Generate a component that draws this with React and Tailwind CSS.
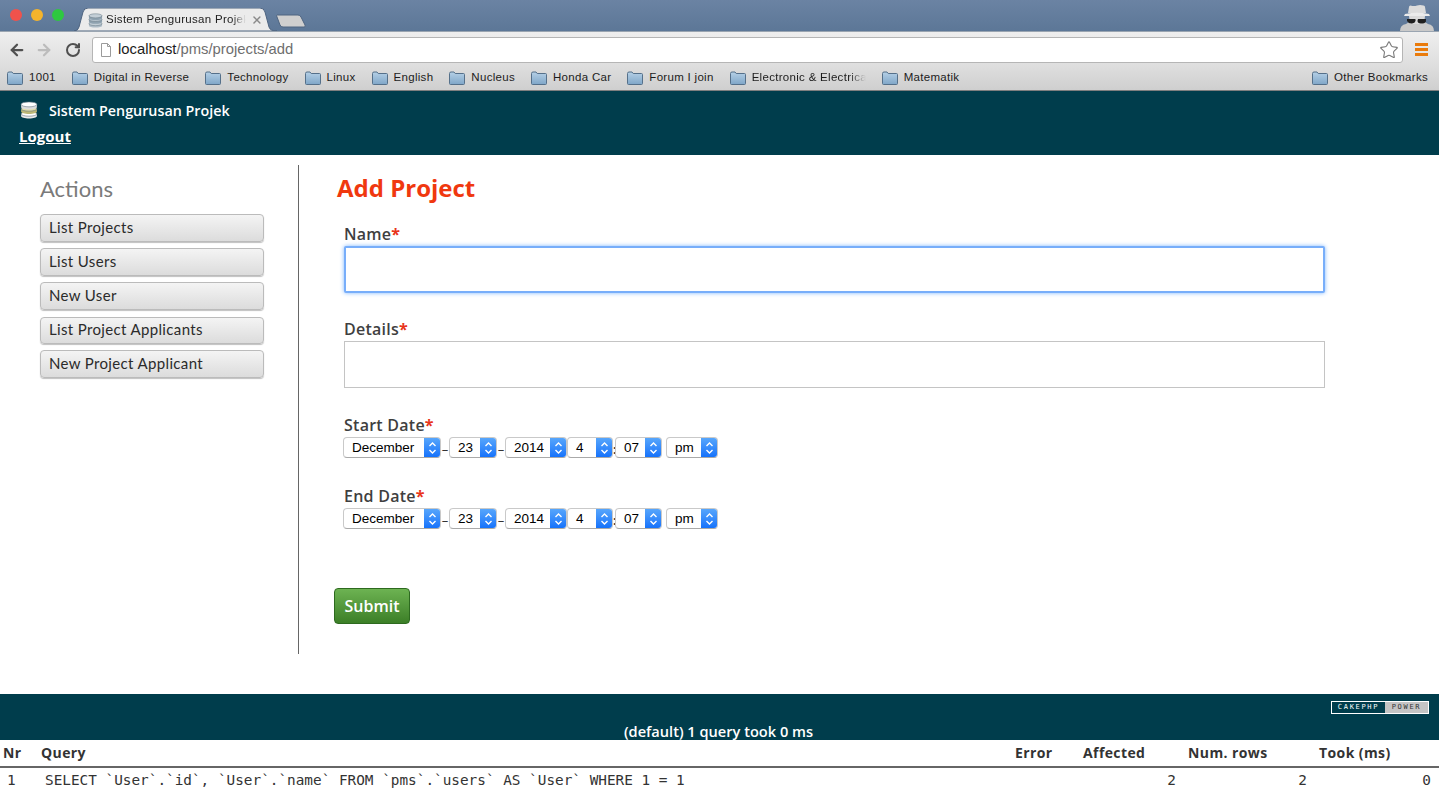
import { Star, ArrowLeft, ArrowRight, RotateCw, X } from 'lucide-react';

const bookmarks = ['1001', 'Digital in Reverse', 'Technology', 'Linux', 'English', 'Nucleus', 'Honda Car', 'Forum I join'];
const actions = [
  { label: 'List Projects', h: 'h-[28px]', mt: 'mt-0' },
  { label: 'List Users', h: 'h-[28px]', mt: 'mt-[6px]' },
  { label: 'New User', h: 'h-[28px]', mt: 'mt-[6px]' },
  { label: 'List Project Applicants', h: 'h-[27px]', mt: 'mt-[7px]' },
  { label: 'New Project Applicant', h: 'h-[28px]', mt: 'mt-[6px]' },
];

const Folder = () => (
  <svg width="16" height="14" viewBox="0 0 16 14" className="shrink-0">
    <defs>
      <linearGradient id="folderFill" x1="0" y1="0" x2="0" y2="1">
        <stop offset="0" stopColor="#b5d0e6" />
        <stop offset="1" stopColor="#7fa6c8" />
      </linearGradient>
    </defs>
    <path d="M.5 2.5Q.5 1 2 1h3l1.2 1.5H14.5q1 0 1 1v9q0 1-1 1h-13q-1 0-1-1z" fill="url(#folderFill)" stroke="#55708a" />
  </svg>
);

const Bookmark = ({ label, fade }) => (
  <div className="flex items-center gap-[6px]">
    <Folder />
    <span className={`text-[11.5px] tracking-[0.3px] text-[#1c1c1c] whitespace-nowrap ${fade ? 'w-[114px] overflow-hidden [mask-image:linear-gradient(to_right,black_85%,transparent)]' : ''}`}>{label}</span>
  </div>
);

const StackIcon = ({ size = 16, light }) => (
  <svg width={size} height={size} viewBox="0 0 16 16" className="shrink-0">
    <path d="M1 11.500v2c0 1.100 3.100 2 7 2s7-.9 7-2v-2z" fill={light ? '#e9e9e9' : '#aebcc7'} />
    <ellipse cx="8" cy="11.500" rx="7" ry="2" fill={light ? '#fff' : '#c3ced6'} stroke="#5c6f7d" strokeWidth=".5" />
    <path d="M1 7v2.500c0 1.100 3.100 2 7 2s7-.9 7-2V7z" fill={light ? '#bdb878' : '#8fa2b0'} />
    <ellipse cx="8" cy="7" rx="7" ry="2" fill={light ? '#e3dfa8' : '#b7c4ce'} stroke="#5c6f7d" strokeWidth=".5" />
    <path d="M1 3v2.500c0 1.100 3.100 2 7 2s7-.9 7-2V3z" fill={light ? '#dcdcdc' : '#8fa2b0'} />
    <ellipse cx="8" cy="3" rx="7" ry="2.200" fill={light ? '#fff' : '#c3ced6'} stroke="#5c6f7d" strokeWidth=".5" />
  </svg>
);

const Incognito = () => (
  <svg width="36" height="32" viewBox="0 0 36 32" className="absolute right-[4px] top-[0px]">
    <path d="M1 31q0-6 6-7l3-2h16l3 2q6 1 6 7z" fill="#c9c9c9" />
    <path d="M10 16h16l-1 8H11z" fill="#dadada" />
    <path d="M10 7q0-1.500 1.500-1.500 3.500 1 6.500 0 3-1 6.500 0Q26 5.500 26 7l1 6H9z" fill="#dcdcdc" />
    <path d="M6 14q12-2.500 24 0l1 2H5z" fill="#ebebeb" />
    <path d="M8 19h8q1 0 .5 2t-3.500 2.500-5-2.500zM19 19h8q.5 3-1.500 4t-5 .3-1.500-4.300z" fill="#1f1f1f" />
  </svg>
);

const Select = ({ value, w }) => (
  <div className={`${w} h-[21px] flex rounded-[4px] bg-white border border-[#c9c9c9] border-b-[#a9a9a9] overflow-hidden shrink-0`}>
    <span className="flex-1 pl-[8px] text-[13.5px] leading-[20px] text-black font-['Liberation_Sans',sans-serif]">{value}</span>
    <span className="w-[17px] -my-px -mr-px bg-gradient-to-b from-[#5aa8fb] to-[#0f6ffb] flex items-center justify-center">
      <svg width="9" height="14" viewBox="0 0 9 14" fill="none" stroke="#fff" strokeWidth="1.400">
        <path d="M1.500 5L4.500 2l3 3M1.500 9l3 3 3-3" />
      </svg>
    </span>
  </div>
);

const DateRow = () => (
  <div className="flex items-end -ml-px">
    <Select value="December" w="w-[98px]" />
    <span className="w-[8px] text-[13px] leading-[18px] text-[#333] text-center">–</span>
    <Select value="23" w="w-[48px]" />
    <span className="w-[8px] text-[13px] leading-[18px] text-[#333] text-center">–</span>
    <Select value="2014" w="w-[62px]" />
    <Select value="4" w="w-[46px]" />
    <span className="w-[2px] text-[13px] leading-[18px] text-[#333] font-bold">:</span>
    <Select value="07" w="w-[47px]" />
    <Select value="pm" w="w-[52px] ml-[4px]" />
  </div>
);

const Label = ({ children }) => (
  <label className="block text-[16px] leading-[20px] tracking-[0.25px] font-semibold text-[#3f3f3f] font-['Open_Sans',sans-serif]">
    {children}<span className="text-[#e8341a] font-bold">*</span>
  </label>
);

export default function App() {
  return (
    <div className="w-[1439px] h-[793px] overflow-hidden bg-white font-['Open_Sans',sans-serif]">
      {/* browser chrome */}
      <div className="h-[91px] font-['Liberation_Sans',sans-serif]">
        <div className="relative h-[31px] bg-gradient-to-b from-[#6b83a3] to-[#5c7797] flex items-start">
          <div className="flex gap-[9px] pl-[10px] pt-[9px]">
            <span className="w-[12px] h-[12px] rounded-full bg-[#f0524c]" />
            <span className="w-[12px] h-[12px] rounded-full bg-[#f5b42c]" />
            <span className="w-[12px] h-[12px] rounded-full bg-[#2ec840]" />
          </div>
          <div className="relative ml-[10px] mt-[8px] w-[203px] h-[23px]">
            <svg width="203" height="23" viewBox="0 0 203 23" className="absolute inset-0">
              <path d="M0 23q4 0 5-4l4-15q1-4 5-4h172q4 0 5 4l4 15q1 4 8 4z" fill="#ebebeb" stroke="#4e6480" />
            </svg>
            <div className="relative flex items-center h-full pl-[14px] pr-[14px] pt-px gap-[3px]">
              <StackIcon size={15} />
              <span className="w-[142px] overflow-hidden whitespace-nowrap text-[11.5px] tracking-[0.3px] text-[#222] [mask-image:linear-gradient(to_right,black_90%,transparent)]">Sistem Pengurusan Projek</span>
              <X size={12} strokeWidth={3} className="text-[#8a8a8a] ml-[2px]" />
            </div>
          </div>
          <svg width="32" height="14" viewBox="0 0 32 14" className="mt-[14px] -ml-[1px]">
            <path d="M1 1h21q2 0 3 2l4 8q1 2-1 2H7q-2 0-3-2L1 3q-1-2 0-2z" fill="#cfcfcf" stroke="#4e6480" />
          </svg>
          <Incognito />
        </div>
        <div className="h-[33px] bg-gradient-to-b from-[#efefef] to-[#dfdfdf] border-t border-[#9aa5b1] flex items-center pl-[8px] pr-[11px] pt-[3px]">
          <ArrowLeft size={18} strokeWidth={3} className="text-[#4f4f4f]" />
          <ArrowRight size={18} strokeWidth={3} className="text-[#bcbcbc] ml-[9px]" />
          <RotateCw size={16} strokeWidth={3} className="text-[#4f4f4f] ml-[12px]" />
          <div className="ml-[11px] flex-1 h-[26px] bg-white border border-[#b5b5b5] rounded-[3px] flex items-center pl-[7px] pr-[3px]">
            <svg width="12" height="14" viewBox="0 0 12 14" fill="#fff" stroke="#9b9b9b"><path d="M1.500.5h6l3 3v10h-9zM7.500.5v3h3" /></svg>
            <span className="ml-[6px] text-[14.8px] text-[#1c1c1c]">localhost<span className="text-[#6e6e6e]">/pms/projects/add</span></span>
            <Star size={20} strokeWidth={1.300} className="ml-auto text-[#777]" />
          </div>
          <div className="ml-[12px] w-[13px] flex flex-col gap-[2px]">
            <span className="h-[3px] bg-[#ea7b0c]" />
            <span className="h-[3px] bg-[#ea7b0c]" />
            <span className="h-[3px] bg-[#ea7b0c]" />
          </div>
        </div>
        <div className="h-[27px] bg-gradient-to-b from-[#dfdfdf] to-[#cfcfcf] border-b border-[#7f7f7f] flex items-center pl-[7px] pr-[11px] pt-[1px] gap-[16px]">
          {bookmarks.map((b) => <Bookmark key={b} label={b} />)}
          <Bookmark label="Electronic & Electrical" fade />
          <Bookmark label="Matematik" />
          <div className="ml-auto"><Bookmark label="Other Bookmarks" /></div>
        </div>
      </div>

      {/* app header */}
      <div className="h-[64px] bg-[#003d4c] pl-[19px] pt-[9px] text-white">
        <div className="flex items-center gap-[11px] h-[20px] pl-px">
          <StackIcon size={18} light />
          <span className="mt-[2px] text-[14.3px] font-semibold leading-[20px]">Sistem Pengurusan Projek</span>
        </div>
        <a className="block mt-[6px] text-[15px] font-bold leading-[20px] underline">Logout</a>
      </div>

      {/* content */}
      <div className="h-[539px] pt-[10px] flex items-start">
        <aside className="w-[299px] h-[489px] border-r border-[#666] pl-[40px] pr-[34px] shrink-0">
          <h3 className="text-[22px] leading-[28px] mt-[10px] text-[#7a7a7a] font-['Lato',sans-serif]">Actions</h3>
          <div className="mt-[11px]">
            {actions.map((a) => (
              <a key={a.label} className={`${a.h} ${a.mt} flex items-center pl-[8px] pb-[2px] rounded-[4px] border border-[#bbb] bg-gradient-to-b from-[#f4f4f4] to-[#dcdcdc] shadow-[0_1px_1px_rgba(0,0,0,0.25)] text-[15px] tracking-[0.35px] text-[#2b2b2b] font-['Lato',sans-serif]`}>
                {a.label}
              </a>
            ))}
          </div>
        </aside>
        <main className="pl-[38px] flex-1">
          <h2 className="text-[24px] leading-[30px] mt-[8px] font-bold text-[#f0380f]">Add Project</h2>
          <form className="pl-[7px] mt-[21px] w-[988px]">
            <Label>Name</Label>
            <div className="mt-[2px] h-[47px] bg-white border-2 border-[#78aefa] rounded-[2px] shadow-[0_0_4px_#7db6ff]" />
            <div className="mt-[26px]"><Label>Details</Label></div>
            <div className="mt-[2px] h-[47px] border border-[#c4c4c4]" />
            <div className="mt-[27px]"><Label>Start Date</Label></div>
            <div className="mt-[2px]"><DateRow /></div>
            <div className="mt-[28px]"><Label>End Date</Label></div>
            <div className="mt-[2px]"><DateRow /></div>
          </form>
          <button className="mt-[59px] -ml-[3px] w-[76px] h-[36px] rounded-[4px] border border-[#2d6a1f] bg-gradient-to-b from-[#6db352] to-[#3c7f27] text-white text-[16px] font-semibold">
            Submit
          </button>
        </main>
      </div>

      {/* footer */}
      <div className="relative h-[46px] bg-[#003d4c] text-white text-center">
        <div className="absolute right-[10px] top-[7px] w-[98px] h-[13px] border border-white flex text-[7px] tracking-[1.700px] leading-[11px] font-['DejaVu_Sans_Mono',monospace] text-center">
          <span className="w-[53px] text-white">CAKEPHP</span>
          <span className="flex-1 bg-[#c4c4c4] text-[#333]">POWER</span>
        </div>
        <div className="pt-[28px] pr-[2px] text-[14.6px] font-semibold leading-[18px] whitespace-nowrap">(default) 1 query took 0 ms</div>
      </div>

      {/* sql log */}
      <table className="w-[1439px] table-fixed text-[#333] border-collapse">
        <colgroup>
          <col className="w-[37px]" />
          <col className="w-[974px]" />
          <col className="w-[68px]" />
          <col className="w-[105px]" />
          <col className="w-[131px]" />
          <col />
        </colgroup>
        <thead>
          <tr className="h-[27px] border-b-2 border-[#666] text-[14px] tracking-[0.4px] font-bold text-left">
            <th className="pl-[3px] pb-[2px]">Nr</th>
            <th className="pl-[4px] pb-[2px]">Query</th>
            <th className="pl-[4px] pb-[2px]">Error</th>
            <th className="pl-[4px] pb-[2px]">Affected</th>
            <th className="pl-[4px] pb-[2px]">Num. rows</th>
            <th className="pl-[4px] pb-[2px]">Took (ms)</th>
          </tr>
        </thead>
        <tbody className="font-['DejaVu_Sans_Mono',monospace] text-[14.36px]">
          <tr className="h-[26px]">
            <td className="pl-[7px]">1</td>
            <td className="pl-[8px] whitespace-nowrap">{'SELECT `User`.`id`, `User`.`name` FROM `pms`.`users` AS `User` WHERE 1 = 1'}</td>
            <td />
            <td className="pr-[8px] text-right">2</td>
            <td className="pr-[8px] text-right">2</td>
            <td className="pr-[8px] text-right">0</td>
          </tr>
        </tbody>
      </table>
    </div>
  );
}
